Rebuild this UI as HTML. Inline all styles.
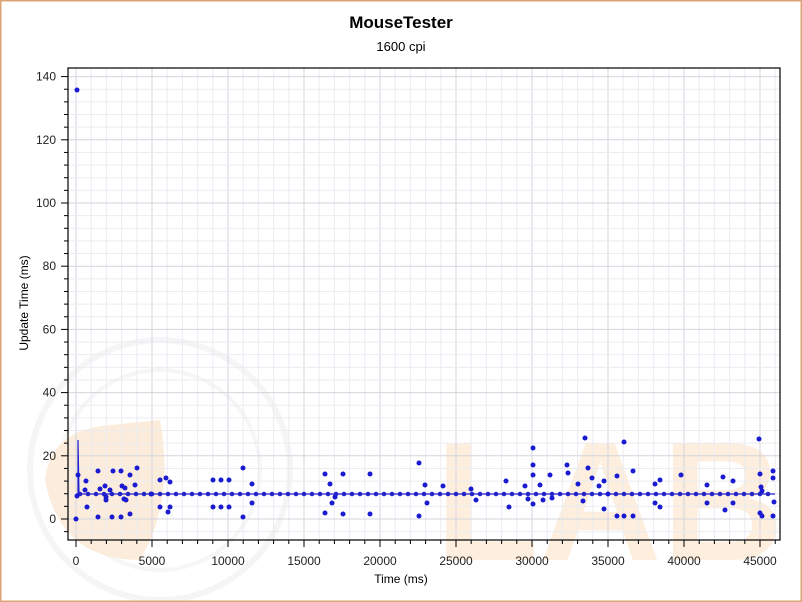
<!DOCTYPE html>
<html><head><meta charset="utf-8"><style>
html,body{margin:0;padding:0;background:#fff}
svg{display:block}
text{font-family:"Liberation Sans","DejaVu Sans",sans-serif}
</style></head><body>
<svg id="s" width="802" height="602" xmlns="http://www.w3.org/2000/svg">
<rect x="0" y="0" width="802" height="602" fill="#fff"/>
<g id="wm" opacity="0.75">
<circle cx="160" cy="470" r="130" fill="none" stroke="#f2f2f2" stroke-width="6"/>
<circle cx="160" cy="470" r="100" fill="none" stroke="#f3f3f3" stroke-width="4"/>
<path d="M45 480 Q50 430 110 425 L160 420 Q175 500 140 560 Q60 560 45 480Z" fill="#fbe6cf"/>
<text x="435" y="560" font-size="170" font-weight="bold" fill="#fde9d2">LAB</text>
</g>
<g id="grid"></g>
<g id="data"></g>
<rect x="68" y="68" width="712" height="472" fill="none" stroke="#000" stroke-width="1.2"/>
<g id="ticks" stroke="#000" stroke-width="1"></g>
<g id="labels" font-size="12" fill="#222"></g>
<text x="401" y="28" font-size="17" font-weight="bold" text-anchor="middle" fill="#000">MouseTester</text>
<text x="401" y="51" font-size="13" text-anchor="middle" fill="#000">1600 cpi</text>
<text x="401" y="583" font-size="12" text-anchor="middle" fill="#000">Time (ms)</text>
<text transform="translate(28,303) rotate(-90)" font-size="12" text-anchor="middle" fill="#000">Update Time (ms)</text>
<rect x="0.5" y="0.5" width="801" height="601" fill="none" stroke="#dca475" stroke-width="2"/>
</svg>
<script>
var NS="http://www.w3.org/2000/svg";
function el(p,t,a,txt){var e=document.createElementNS(NS,t);for(var k in a)e.setAttribute(k,a[k]);if(txt!=null)e.textContent=txt;document.getElementById(p).appendChild(e);return e;}
function X(t){return 76+t*0.0152}
function Y(v){return 519-v*3.16}
for(var t=0;t<=46000;t+=1000){var x=X(t);var maj=t%5000==0;
el("grid","line",{x1:x,y1:68,x2:x,y2:540,stroke:maj?"#d4d4de":"#ebebf2","stroke-width":1});
el("ticks","line",{x1:x,y1:540,x2:x,y2:maj?547:544});
if(maj)el("labels","text",{x:x,y:565,"text-anchor":"middle"},String(t));}
for(var v=-4;v<=140;v+=4){var y=Y(v);var maj=v%20==0;
el("grid","line",{x1:68,y1:y,x2:780,y2:y,stroke:maj?"#d4d4de":"#ebebf2","stroke-width":1});
el("ticks","line",{x1:maj?61:64,y1:y,x2:68,y2:y});
if(maj)el("labels","text",{x:56,y:y+4,"text-anchor":"end"},String(v));}
el("data","path",{d:"M76 494 L78 494 L78 440 L79 494 L775 494",stroke:"#2020d0","stroke-width":1.2,fill:"none"});
for(var x=80;x<776;x+=8)el("data","circle",{cx:x,cy:494,r:2.3,fill:"#2424c8"});
var P=[[77,90],[76,519],[78,475],[77,496],[85,490],[86,481],[87,507],[98,471],[98,517],[100,489],[105,486],[106,497],[106,500],[110,490],[113,471],[112,517],[121,471],[121,517],[122,486],[125,488],[124,499],[126,500],[130,475],[130,514],[135,485],[137,468],[151,494],[160,480],[160,507],[166,478],[168,512],[170,482],[170,507],[213,480],[213,507],[221,480],[221,507],[229,480],[229,507],[243,468],[243,517],[252,484],[252,503],[325,474],[325,513],[330,484],[332,503],[335,497],[343,474],[343,514],[370,474],[370,514],[419,463],[419,516],[425,485],[427,503],[443,486],[471,489],[476,500],[506,481],[509,507],[525,486],[528,499],[533,448],[533,465],[533,475],[533,504],[540,485],[543,500],[550,475],[552,498],[567,465],[568,473],[578,484],[583,501],[585,438],[588,468],[592,478],[599,486],[604,481],[604,509],[608,494],[617,476],[617,516],[624,442],[624,516],[633,471],[633,516],[655,484],[655,503],[660,480],[660,507],[681,475],[707,485],[707,503],[723,477],[725,510],[733,481],[733,503],[759,439],[760,474],[761,487],[762,491],[760,513],[762,516],[773,471],[773,478],[774,502],[773,516]];
P.forEach(function(p){el("data","circle",{cx:p[0],cy:p[1],r:2.5,fill:"#1a1ad0"});});
</script>
</body></html>
